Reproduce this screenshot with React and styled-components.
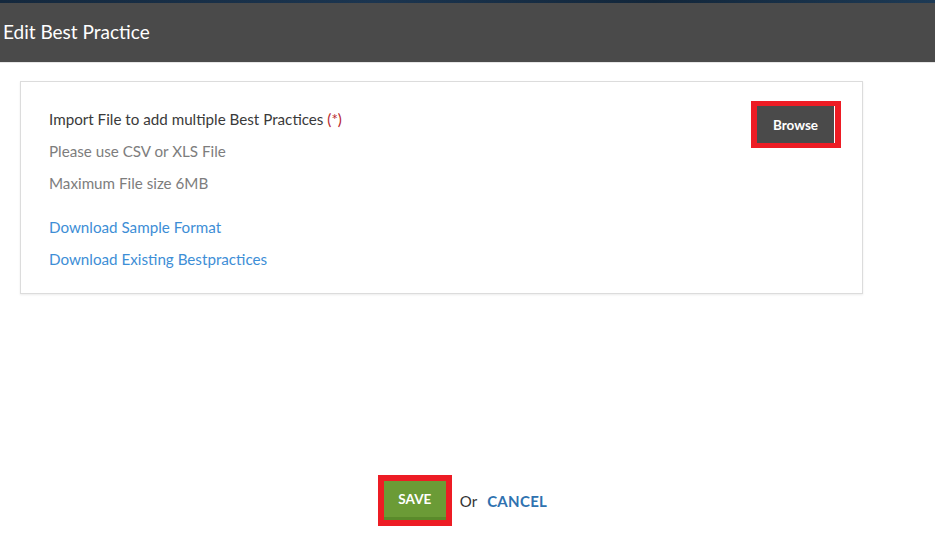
import React from "react";
import styled, { createGlobalStyle } from "styled-components";

const GlobalStyle = createGlobalStyle`
  html, body {
    margin: 0;
    padding: 0;
    background: #fff;
    font-family: Lato, "Open Sans", sans-serif;
  }
`;

function App() {
  return (
    <Page>
      <GlobalStyle />
      <TopStrip />
      <Header>
        <Title>Edit Best Practice</Title>
      </Header>
      <Main>
        <Card>
          <Info>
            <Line>
              Import File to add multiple Best Practices <Req>(*)</Req>
            </Line>
            <Line $muted>Please use CSV or XLS File</Line>
            <Line $muted>Maximum File size 6MB</Line>
            <Links>
              <LinkLine href="#">Download Sample Format</LinkLine>
              <LinkLine href="#">Download Existing Bestpractices</LinkLine>
            </Links>
          </Info>
          <Highlight $padY={5} $padX={6}>
            <BrowseButton>Browse</BrowseButton>
          </Highlight>
        </Card>
      </Main>
      <Footer>
        <Highlight $padY={6} $padX={6}>
          <SaveButton>SAVE</SaveButton>
        </Highlight>
        <OrText>Or</OrText>
        <CancelLink href="#">CANCEL</CancelLink>
      </Footer>
    </Page>
  );
}

const Page = styled.div`
  display: flex;
  flex-direction: column;
  height: 100vh;
`;

const TopStrip = styled.div`
  height: 3px;
  background: linear-gradient(90deg, #14283d, #1b3550 40%, #12263a 70%, #1d3a55);
`;

const Header = styled.header`
  height: 59px;
  background: #4a4a4a;
  border-bottom: 1px solid #e6e6e6;
  display: flex;
  align-items: center;
  padding-left: 3px;
`;

const Title = styled.h1`
  margin: 0 0 2px;
  color: #fff;
  font-size: 19px;
  font-weight: 400;
`;

const Main = styled.main`
  padding: 18px 72px 0 20px;
`;

const Card = styled.section`
  display: flex;
  justify-content: space-between;
  align-items: flex-start;
  border: 1px solid #dcdcdc;
  box-shadow: 0 1px 2px rgba(0, 0, 0, 0.08);
  padding: 19px 21px 18px 28px;
`;

const Info = styled.div`
  display: flex;
  flex-direction: column;
  padding-top: 2px;
`;

const Line = styled.div`
  font-size: 15.2px;
  line-height: 32px;
  color: ${(p) => (p.$muted ? "#7d7d7d" : "#3a3a3a")};
`;

const Req = styled.span`
  color: #b7282e;
`;

const Links = styled.div`
  display: flex;
  flex-direction: column;
  margin-top: 12px;
`;

const LinkLine = styled.a`
  font-size: 15.2px;
  line-height: 32px;
  color: #3d8ed6;
  text-decoration: none;
`;

const Highlight = styled.div`
  display: inline-flex;
  background: #ed1c24;
  padding: ${(p) => p.$padY}px ${(p) => p.$padX}px;
`;

const BrowseButton = styled.button`
  width: 78px;
  height: 37px;
  border: none;
  border-right: 1px solid #fff;
  background: #4a4a4a;
  color: #fff;
  font-family: Lato, sans-serif;
  font-size: 13.5px;
  font-weight: 700;
  padding: 0;
  cursor: pointer;
`;

const Footer = styled.footer`
  margin-top: auto;
  display: flex;
  align-items: center;
  justify-content: center;
  padding: 0 10px 12px 0;
`;

const SaveButton = styled.button`
  width: 62px;
  height: 39px;
  border: none;
  border-bottom: 3px solid #5a8a2a;
  background: #6b9b36;
  color: #fff;
  font-family: Lato, sans-serif;
  font-size: 13.5px;
  font-weight: 700;
  padding: 0;
  cursor: pointer;
`;

const OrText = styled.span`
  margin-left: 8px;
  font-size: 15px;
  color: #333;
`;

const CancelLink = styled.a`
  margin-left: 10px;
  font-size: 15px;
  font-weight: 700;
  color: #2f72b0;
  text-decoration: none;
  letter-spacing: 0.3px;
`;

export default App;
